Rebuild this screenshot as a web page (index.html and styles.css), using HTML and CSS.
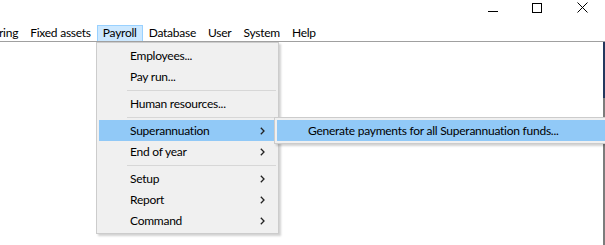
FILE: index.html
```html
<!DOCTYPE html>
<html lang="en">
<head>
    <meta charset="UTF-8">
    <title>Payroll menu</title>
    <link rel="stylesheet" href="styles.css">
</head>
<body>
    <div class="window">
        <!-- title bar buttons -->
        <div class="titlebar">
            <span class="tb-btn">
                <svg width="10" height="10" viewBox="0 0 10 10"><path d="M0 8.5H10" stroke="#000" stroke-width="1"/></svg>
            </span>
            <span class="tb-btn">
                <svg width="10" height="10" viewBox="0 0 10 10"><rect x="0.5" y="0.5" width="9" height="9" fill="none" stroke="#000" stroke-width="1"/></svg>
            </span>
            <span class="tb-btn">
                <svg width="11" height="11" viewBox="0 0 11 11"><path d="M0.5 0.5L10.5 10.5M10.5 0.5L0.5 10.5" stroke="#000" stroke-width="1"/></svg>
            </span>
        </div>

        <!-- menu bar -->
        <div class="menubar">
            <span class="mb-item first">ring</span>
            <span class="mb-item">Fixed assets</span>
            <span class="mb-item open">Payroll</span>
            <span class="mb-item">Database</span>
            <span class="mb-item">User</span>
            <span class="mb-item">System</span>
            <span class="mb-item">Help</span>
        </div>

        <div class="content">
            <div class="workspace"></div>
            <div class="edge"></div>
        </div>

        <!-- payroll dropdown -->
        <div class="menu payroll-menu">
            <div class="menu-item">Employees...</div>
            <div class="menu-item">Pay run...</div>
            <div class="sep"></div>
            <div class="menu-item">Human resources...</div>
            <div class="sep"></div>
            <div class="menu-item active">Superannuation <svg class="arrow" width="5" height="8" viewBox="0 0 5 8"><path d="M0.8 0.8L4 4L0.8 7.2" fill="none" stroke="#222" stroke-width="1.3"/></svg></div>
            <div class="menu-item">End of year <svg class="arrow" width="5" height="8" viewBox="0 0 5 8"><path d="M0.8 0.8L4 4L0.8 7.2" fill="none" stroke="#222" stroke-width="1.3"/></svg></div>
            <div class="sep"></div>
            <div class="menu-item">Setup <svg class="arrow" width="5" height="8" viewBox="0 0 5 8"><path d="M0.8 0.8L4 4L0.8 7.2" fill="none" stroke="#222" stroke-width="1.3"/></svg></div>
            <div class="menu-item">Report <svg class="arrow" width="5" height="8" viewBox="0 0 5 8"><path d="M0.8 0.8L4 4L0.8 7.2" fill="none" stroke="#222" stroke-width="1.3"/></svg></div>
            <div class="menu-item">Command <svg class="arrow" width="5" height="8" viewBox="0 0 5 8"><path d="M0.8 0.8L4 4L0.8 7.2" fill="none" stroke="#222" stroke-width="1.3"/></svg></div>
        </div>

        <!-- superannuation submenu -->
        <div class="menu super-menu">
            <div class="menu-item active">Generate payments for all Superannuation funds...</div>
        </div>
    </div>
</body>
</html>
```

FILE: styles.css
```css
* {
    margin: 0;
    padding: 0;
    box-sizing: border-box;
}

body {
    font-family: Lato, "Noto Sans", sans-serif;
    font-size: 12px;
    letter-spacing: -0.25px;
    color: #000;
    background-color: #fff;
    overflow: hidden;
}

.window {
    position: relative;
    width: 605px;
    height: 245px;
    display: flex;
    flex-direction: column;
}

/* Title bar */
.titlebar {
    height: 25px;
    display: flex;
    justify-content: flex-end;
}

.tb-btn {
    width: 44px;
    height: 15px;
    display: flex;
    justify-content: center;
    align-items: center;
}

.tb-btn:last-child {
    width: 46px;
}

/* Menu bar */
.menubar {
    height: 17px;
    display: flex;
    align-items: stretch;
    border-bottom: 1px solid #a0a0a0;
}

.mb-item {
    padding: 0 5px;
    line-height: 14px;
    border: 1px solid transparent;
    border-bottom: none;
    white-space: nowrap;
}

.mb-item.first {
    padding-left: 0;
    margin-left: -2px;
}

.mb-item.open {
    background-color: #cce8ff;
    border-color: #99d1ff;
}

/* Content area */
.content {
    flex: 1;
    display: flex;
}

.workspace {
    flex: 1;
}

.edge {
    width: 2px;
    background: linear-gradient(#24385e 0 56px, #7c7c7c 56px);
}

/* Menus */
.menu {
    position: absolute;
    background-color: #f0f0f0;
    border: 1px solid #cccccc;
    padding: 2px;
    box-shadow: 2px 2px 2px rgba(0, 0, 0, 0.18);
}

.payroll-menu {
    left: 96px;
    top: 42px;
    width: 183px;
}

.super-menu {
    left: 274px;
    top: 117px;
    width: 340px;
}

.menu-item {
    height: 21px;
    line-height: 21px;
    padding-left: 31px;
    padding-right: 10px;
    display: flex;
    justify-content: space-between;
    align-items: center;
    white-space: nowrap;
}

.menu-item.active {
    background-color: #91c9f7;
}

.arrow {
    margin-right: 1px;
}

.sep {
    height: 6px;
    margin-left: 28px;
    display: flex;
    align-items: center;
}

.sep::after {
    content: "";
    flex: 1;
    border-top: 1px solid #d7d7d7;
}
```
